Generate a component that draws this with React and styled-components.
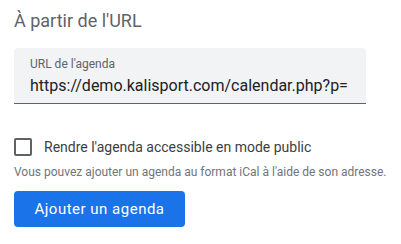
import styled, { createGlobalStyle } from "styled-components";

const GlobalStyle = createGlobalStyle`
  body {
    margin: 0;
    background: #ffffff;
    font-family: Roboto, "Liberation Sans", Arial, sans-serif;
  }
`;

const Panel = styled.div`
  padding: 9px 14px 0 14px;
  width: 401px;
  box-sizing: border-box;
`;

const Title = styled.h2`
  margin: 0;
  font-size: 18px;
  font-weight: 400;
  line-height: 24px;
  color: #5f6368;
`;

const Field = styled.div`
  margin-top: 15px;
  width: 352px;
  height: 56px;
  box-sizing: border-box;
  padding: 8px 16px 0 16px;
  background: #f1f3f4;
  border-radius: 4px 4px 0 0;
  border-bottom: 1px solid #5f6368;
`;

const FieldLabel = styled.div`
  font-size: 12px;
  line-height: 16px;
  color: #5f6368;
`;

const FieldValue = styled.div`
  margin-top: 4px;
  font-size: 16px;
  line-height: 20px;
  color: #202124;
  white-space: nowrap;
  overflow: hidden;
`;

const CheckRow = styled.label`
  margin-top: 34px;
  display: flex;
  align-items: center;
  gap: 12px;
`;

const Box = styled.span`
  width: 18px;
  height: 18px;
  box-sizing: border-box;
  border: 2px solid #5f6368;
  border-radius: 2px;
  flex: none;
`;

const CheckText = styled.span`
  font-size: 14px;
  color: #3c4043;
`;

const Hint = styled.p`
  margin: 8px 0 0 0;
  font-size: 12px;
  line-height: 16px;
  color: #70757a;
`;

const Button = styled.button`
  display: block;
  margin-top: 11px;
  width: 171px;
  height: 36px;
  border: none;
  border-radius: 4px;
  background: #1a73e8;
  color: #ffffff;
  font-family: Roboto, "Liberation Sans", Arial, sans-serif;
  font-size: 15px;
  font-weight: 400;
  letter-spacing: 0.5px;
`;

export default function App() {
  return (
    <>
      <GlobalStyle />
      <Panel>
        <Title>À partir de l'URL</Title>
        <Field>
          <FieldLabel>URL de l'agenda</FieldLabel>
          <FieldValue>https://demo.kalisport.com/calendar.php?p=</FieldValue>
        </Field>
        <CheckRow>
          <Box />
          <CheckText>Rendre l'agenda accessible en mode public</CheckText>
        </CheckRow>
        <Hint>Vous pouvez ajouter un agenda au format iCal à l'aide de son adresse.</Hint>
        <Button>Ajouter un agenda</Button>
      </Panel>
    </>
  );
}
